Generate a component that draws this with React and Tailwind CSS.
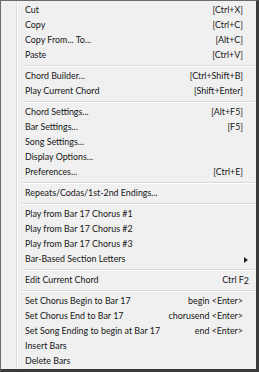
import React from "react";

const groups = [
  [
    ["Cut", "[Ctrl+X]"],
    ["Copy", "[Ctrl+C]"],
    ["Copy From... To...", "[Alt+C]"],
    ["Paste", "[Ctrl+V]"],
  ],
  [
    ["Chord Builder...", "[Ctrl+Shift+B]"],
    ["Play Current Chord", "[Shift+Enter]"],
  ],
  [
    ["Chord Settings...", "[Alt+F5]"],
    ["Bar Settings...", "[F5]"],
    ["Song Settings...", ""],
    ["Display Options...", ""],
    ["Preferences...", "[Ctrl+E]"],
  ],
  [["Repeats/Codas/1st-2nd Endings...", ""]],
  [
    ["Play from Bar 17 Chorus #1", ""],
    ["Play from Bar 17 Chorus #2", ""],
    ["Play from Bar 17 Chorus #3", ""],
    ["Bar-Based Section Letters", "arrow"],
  ],
  [["Edit Current Chord", "ctrlf2"]],
  [
    ["Set Chorus Begin to Bar 17", "begin <Enter>"],
    ["Set Chorus End to Bar 17", "chorusend <Enter>"],
    ["Set Song Ending to begin at Bar 17", "end <Enter>"],
    ["Insert Bars", ""],
    ["Delete Bars", ""],
  ],
];

function Shortcut({ s }) {
  if (s === "arrow") {
    return (
      <svg width="4" height="6" viewBox="0 0 4 6" className="mr-[-5px]">
        <polygon points="0,0 4,3 0,6" fill="#222" />
      </svg>
    );
  }
  if (s === "ctrlf2") {
    return (
      <span className="mr-[-6px]">
        Ctrl F<span className="relative top-[1px]">2</span>
      </span>
    );
  }
  return <span>{s}</span>;
}

export default function App() {
  return (
    <div className="w-[259px] h-[372px] bg-white">
      <div
        className="w-[259px] h-[372px] border-l border-t border-l-[#6b6b6b] border-t-[#6b6b6b] border-r-[3px] border-b-[3px] border-r-[#3a3a3a] border-b-[#3a3a3a] bg-[#f0f0f0] bg-[linear-gradient(to_right,transparent_15px,#dcdcdc_15px,#dcdcdc_16px,#ffffff_16px,#ffffff_17px,transparent_17px)] pt-[2px] text-[#161616] text-[8.9px] leading-none"
        style={{ fontFamily: "Lato, 'Noto Sans', sans-serif" }}
      >
        {groups.map((g, gi) => (
          <div key={gi}>
            {gi > 0 && (
              <div className="h-[6px] flex flex-col justify-center pl-[21px] pr-[1px]">
                <div className="h-px bg-[#d9d9d9]" />
                <div className="h-px bg-white" />
              </div>
            )}
            {g.map(([label, sc]) => (
              <div
                key={label}
                className="h-[15px] flex items-center justify-between pl-[24px] pr-[13px] whitespace-nowrap"
              >
                <span>{label}</span>
                {sc && <Shortcut s={sc} />}
              </div>
            ))}
          </div>
        ))}
      </div>
    </div>
  );
}
